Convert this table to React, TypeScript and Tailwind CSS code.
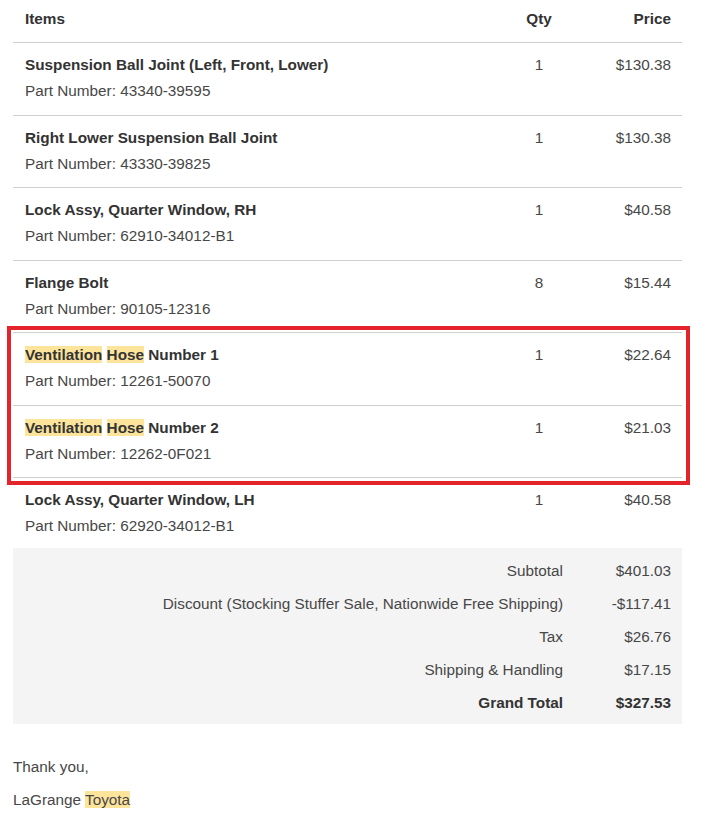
import React from "react";

interface Item {
  name: React.ReactNode;
  part: string;
  qty: number;
  price: string;
}

const Mark = ({ children }: { children: React.ReactNode }) => (
  <span className="bg-[#fde49b]">{children}</span>
);

const items: Item[] = [
  { name: "Suspension Ball Joint (Left, Front, Lower)", part: "43340-39595", qty: 1, price: "$130.38" },
  { name: "Right Lower Suspension Ball Joint", part: "43330-39825", qty: 1, price: "$130.38" },
  { name: "Lock Assy, Quarter Window, RH", part: "62910-34012-B1", qty: 1, price: "$40.58" },
  { name: "Flange Bolt", part: "90105-12316", qty: 8, price: "$15.44" },
  {
    name: (
      <>
        <Mark>Ventilation</Mark> <Mark>Hose</Mark> Number 1
      </>
    ),
    part: "12261-50070",
    qty: 1,
    price: "$22.64",
  },
  {
    name: (
      <>
        <Mark>Ventilation</Mark> <Mark>Hose</Mark> Number 2
      </>
    ),
    part: "12262-0F021",
    qty: 1,
    price: "$21.03",
  },
  { name: "Lock Assy, Quarter Window, LH", part: "62920-34012-B1", qty: 1, price: "$40.58" },
];

const totals = [
  { label: "Subtotal", value: "$401.03" },
  { label: "Discount (Stocking Stuffer Sale, Nationwide Free Shipping)", value: "-$117.41" },
  { label: "Tax", value: "$26.76" },
  { label: "Shipping & Handling", value: "$17.15" },
];

export default function App() {
  return (
    <div
      className="relative min-h-[838px] bg-white pl-[13px] pr-[25px] text-[15.3px] text-[#474747]"
      style={{ fontFamily: '"Liberation Sans", Arial, sans-serif' }}
    >
      {/* Header */}
      <div className="flex pt-[9px] pb-[13px] font-bold text-[#333] leading-[20px]">
        <div className="flex-1 pl-[12px]">Items</div>
        <div className="w-[80px] text-center">Qty</div>
        <div className="w-[103px] pr-[11px] text-right">Price</div>
      </div>

      {/* Rows */}
      {items.map((item, idx) => (
        <div
          key={idx}
          className={
            "flex border-t border-[#cfcfcf] pt-[12px] leading-[20px] " +
            (idx === items.length - 1 ? "pb-[12px]" : "pb-[13.5px]")
          }
        >
          <div className="flex-1 pl-[12px]">
            <div className="font-bold text-[#333]">{item.name}</div>
            <div className="mt-[6px]">Part Number: {item.part}</div>
          </div>
          <div className="w-[80px] text-center">{item.qty}</div>
          <div className="w-[103px] pr-[11px] text-right">{item.price}</div>
        </div>
      ))}

      {/* Totals */}
      <div className="bg-[#f4f4f4] pt-[7px] pb-[4px]">
        {totals.map((t) => (
          <div key={t.label} className="flex h-[33px] items-center">
            <div className="flex-1 text-right">{t.label}</div>
            <div className="w-[119px] pr-[11px] text-right">{t.value}</div>
          </div>
        ))}
        <div className="flex h-[33px] items-center font-bold text-[#333]">
          <div className="flex-1 text-right">Grand Total</div>
          <div className="w-[119px] pr-[11px] text-right">$327.53</div>
        </div>
      </div>

      {/* Sign-off */}
      <div className="pt-[33px] leading-[20px]">
        <p>Thank you,</p>
        <p className="mt-[13px]">
          LaGrange <Mark>Toyota</Mark>
        </p>
      </div>

      {/* Annotation */}
      <div className="pointer-events-none absolute left-[7px] top-[326px] h-[159px] w-[683px] border-[4px] border-[#e3242b]" />
    </div>
  );
}
